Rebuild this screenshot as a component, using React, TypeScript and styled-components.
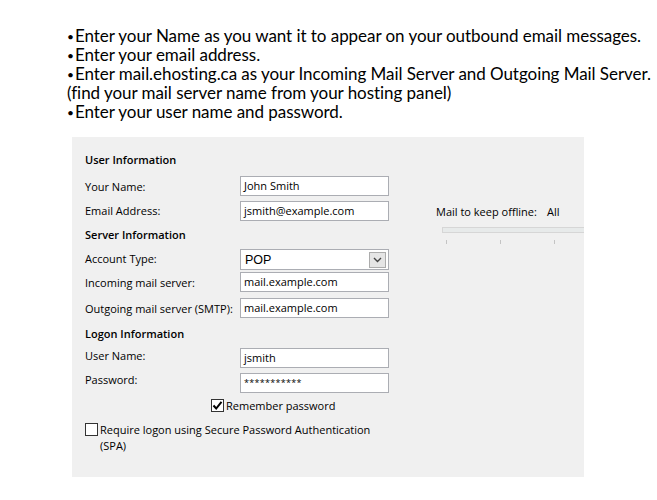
import React from 'react';
import styled, { createGlobalStyle } from 'styled-components';

const GlobalStyle = createGlobalStyle`
  html, body {
    margin: 0;
    padding: 0;
    background: #ffffff;
  }
`;

const Page = styled.div`
  width: 657px;
  height: 500px;
  overflow: hidden;
  padding: 26px 0 0 67px;
  box-sizing: border-box;
`;

const Steps = styled.div`
  font-family: 'Lato', 'Liberation Sans', sans-serif;
  font-size: 17px;
  line-height: 19px;
  color: #000;
  letter-spacing: -0.05px;
`;

const Step = styled.div`
  height: 19px;
  white-space: nowrap;
`;

const Bullet = styled.span`
  font-size: 12px;
  line-height: 0;
  margin-right: 1px;
  vertical-align: 1px;
`;

const Panel = styled.div`
  margin: 16px 0 0 5px;
  width: 512px;
  height: 340px;
  background: #f0f0f0;
  display: flex;
  overflow: hidden;
  font-family: 'Open Sans', 'Noto Sans', sans-serif;
  font-size: 11px;
  color: #000;
`;

const Form = styled.div`
  padding: 14px 0 0 13px;
  display: flex;
  flex-direction: column;
  flex: none;
`;

const SectionTitle = styled.div<{ $top: number }>`
  font-weight: 600;
  height: 18px;
  line-height: 18px;
  margin-top: ${({ $top }) => $top}px;
`;

const Row = styled.div<{ $top: number; $lift?: number }>`
  display: flex;
  align-items: center;
  margin-top: ${({ $top }) => $top}px;
  & > span {
    position: relative;
    top: ${({ $lift }) => -($lift ?? 0)}px;
  }
`;

const Label = styled.span`
  width: 155px;
  flex: none;
  white-space: nowrap;
`;

const TextBox = styled.div`
  width: 149px;
  height: 20px;
  box-sizing: border-box;
  border: 1px solid #abadb3;
  background: #fff;
  padding: 0 3px;
  line-height: 18px;
  white-space: nowrap;
  overflow: hidden;
`;

const Masked = styled.span`
  font-size: 9px;
  letter-spacing: 0.3px;
  vertical-align: 1px;
`;

const Select = styled(TextBox)`
  height: 21px;
  display: flex;
  align-items: center;
  justify-content: space-between;
  padding: 0 2px 0 4px;
  font-family: 'Liberation Sans', sans-serif;
  font-size: 12.5px;
`;

const DropButton = styled.div`
  width: 17px;
  height: 16px;
  box-sizing: border-box;
  border: 1px solid #acacac;
  background: #e5e5e5;
  display: flex;
  align-items: center;
  justify-content: center;
`;

const CheckRow = styled.div<{ $indent: number; $top: number }>`
  display: flex;
  align-items: flex-start;
  gap: 2px;
  padding-left: ${({ $indent }) => $indent}px;
  margin-top: ${({ $top }) => $top}px;
  line-height: 16px;
`;

const Box = styled.div`
  width: 13px;
  height: 13px;
  box-sizing: border-box;
  border: 1px solid #333;
  background: #fff;
  margin-top: 1px;
  flex: none;
  display: flex;
  align-items: center;
  justify-content: center;
`;

const SideColumn = styled.div`
  margin-left: 47px;
  padding-top: 67px;
  flex: 1;
  min-width: 0;
`;

const OfflineLabel = styled.div`
  display: flex;
  gap: 10px;
  white-space: nowrap;
  line-height: 16px;
`;

const Track = styled.div`
  margin: 7px 0 0 6px;
  height: 4px;
  border: 1px solid #d6d6d6;
  border-right: none;
  background: #e7eaea;
`;

const Ticks = styled.div`
  display: flex;
  gap: 53px;
  margin: 7px 0 0 10px;
`;

const Tick = styled.div`
  width: 1px;
  height: 4px;
  background: #c4c4c4;
`;

const Check = () => (
  <svg width="11" height="11" viewBox="0 0 11 11">
    <path d="M1.5 5.5 L4.2 8.5 L9.5 1.8" fill="none" stroke="#000" strokeWidth="2" />
  </svg>
);

const Chevron = () => (
  <svg width="9" height="6" viewBox="0 0 9 6">
    <path d="M1 1 L4.5 4.5 L8 1" fill="none" stroke="#444" strokeWidth="1.4" />
  </svg>
);

const steps: [boolean, string][] = [
  [true, 'Enter your Name as you want it to appear on your outbound email messages.'],
  [true, 'Enter your email address.'],
  [true, 'Enter mail.ehosting.ca as your Incoming Mail Server and Outgoing Mail Server.'],
  [false, '(find your mail server name from your hosting panel)'],
  [true, 'Enter your user name and password.'],
];

export default function App() {
  return (
    <Page>
      <GlobalStyle />
      <Steps>
        {steps.map(([bullet, text]) => (
          <Step key={text}>
            {bullet && <Bullet>•</Bullet>}
            {text}
          </Step>
        ))}
      </Steps>
      <Panel>
        <Form>
          <SectionTitle $top={0}>User Information</SectionTitle>
          <Row $top={7}>
            <Label>Your Name:</Label>
            <TextBox>John Smith</TextBox>
          </Row>
          <Row $top={5} $lift={1}>
            <Label>Email Address:</Label>
            <TextBox>jsmith@example.com</TextBox>
          </Row>
          <SectionTitle $top={5}>Server Information</SectionTitle>
          <Row $top={5} $lift={1}>
            <Label>Account Type:</Label>
            <Select>
              POP
              <DropButton>
                <Chevron />
              </DropButton>
            </Select>
          </Row>
          <Row $top={2}>
            <Label>Incoming mail server:</Label>
            <TextBox>mail.example.com</TextBox>
          </Row>
          <Row $top={6}>
            <Label>Outgoing mail server (SMTP):</Label>
            <TextBox>mail.example.com</TextBox>
          </Row>
          <SectionTitle $top={7}>Logon Information</SectionTitle>
          <Row $top={5} $lift={3}>
            <Label>User Name:</Label>
            <TextBox>jsmith</TextBox>
          </Row>
          <Row $top={5} $lift={4}>
            <Label>Password:</Label>
            <TextBox>
              <Masked>***********</Masked>
            </TextBox>
          </Row>
          <CheckRow $indent={126} $top={5}>
            <Box>
              <Check />
            </Box>
            Remember password
          </CheckRow>
          <CheckRow $indent={0} $top={8}>
            <Box />
            <span>
              Require logon using Secure Password Authentication
              <br />
              (SPA)
            </span>
          </CheckRow>
        </Form>
        <SideColumn>
          <OfflineLabel>
            <span>Mail to keep offline:</span>
            <span>All</span>
          </OfflineLabel>
          <Track />
          <Ticks>
            <Tick />
            <Tick />
            <Tick />
          </Ticks>
        </SideColumn>
      </Panel>
    </Page>
  );
}
